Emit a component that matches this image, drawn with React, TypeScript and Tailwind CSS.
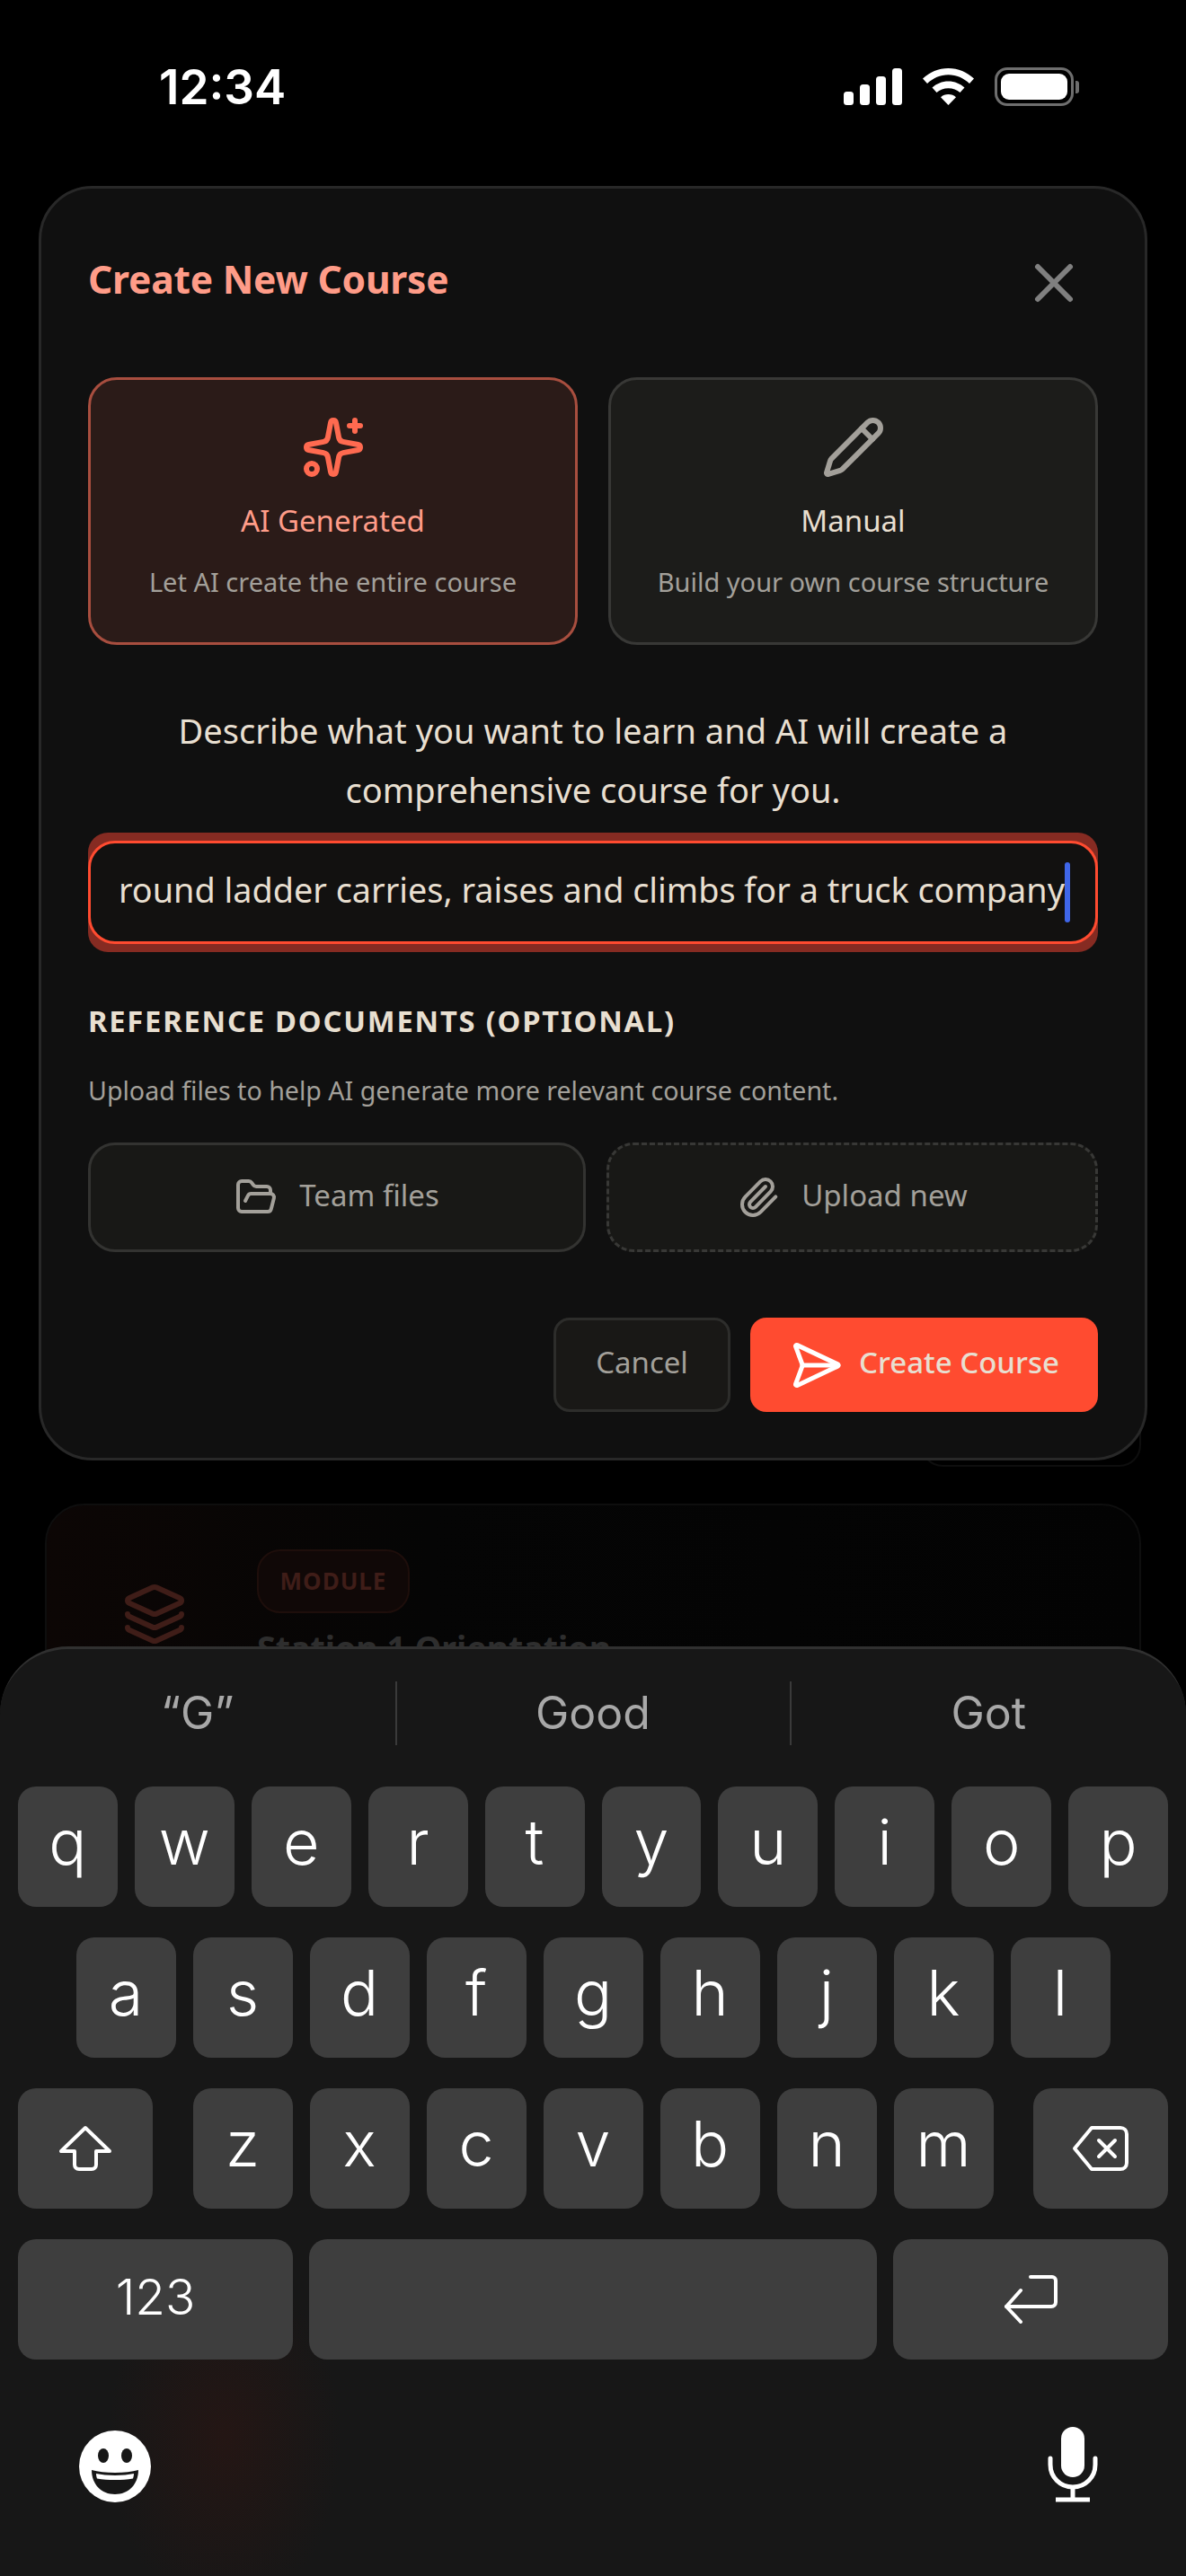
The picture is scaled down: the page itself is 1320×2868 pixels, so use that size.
import { FolderOpen, Layers, Paperclip, Pencil, SendHorizontal, Sparkles, X } from 'lucide-react';

const UI = "font-['Noto_Sans',sans-serif]";
const IOS = "font-['Inter',sans-serif]";

const ROW_1 = ['q', 'w', 'e', 'r', 't', 'y', 'u', 'i', 'o', 'p'];
const ROW_2 = ['a', 's', 'd', 'f', 'g', 'h', 'j', 'k', 'l'];
const ROW_3 = ['z', 'x', 'c', 'v', 'b', 'n', 'm'];

function Key({ label }: { label: string }) {
  return (
    <div className="flex h-[134px] w-[111px] items-center justify-center rounded-[20px] bg-[#3e3e3e] pb-[10px] text-[70px] font-light leading-none text-white">
      {label}
    </div>
  );
}

function StatusBar() {
  return (
    <div className="flex h-[207px] items-start justify-between pl-[177px] pr-[119px] pt-[66px]">
      <span className={`${IOS} text-[53px] font-semibold leading-[62px] text-white`}>12:34</span>
      <div className="flex items-center gap-[23px] pt-[9px]">
        <svg width="65" height="41" viewBox="0 0 65 41" fill="#fff">
          <rect x="0" y="26" width="11" height="15" rx="3.5" />
          <rect x="18" y="18" width="11" height="23" rx="3.5" />
          <rect x="36" y="9" width="11" height="32" rx="3.5" />
          <rect x="54" y="0" width="11" height="41" rx="3.5" />
        </svg>
        <svg width="57" height="41" viewBox="0 0 57 41" fill="#fff">
          <path d="M28.5 0C17.5 0 7.700 4.300 0 11.500l5 5.500C11.500 10.800 19.500 7.200 28.500 7.200S45.500 10.800 52 17l5-5.500C49.300 4.300 39.500 0 28.500 0z" />
          <path d="M28.500 14.500c-7 0-13.200 2.700-18 7l5 5.500c3.500-3 8-4.800 13-4.800s9.500 1.800 13 4.800l5-5.500c-4.800-4.300-11-7-18-7z" />
          <path d="M28.500 29c-3.300 0-6.300 1.200-8.500 3.200L28.500 41 37 32.200C34.800 30.200 31.800 29 28.500 29z" />
        </svg>
        <div className="flex items-center gap-[2px]">
          <div className="flex h-[43px] w-[88px] items-center justify-center rounded-[14px] border-[3px] border-[#6e6e6e]">
            <div className="h-[29px] w-[74px] rounded-[9px] bg-white" />
          </div>
          <div className="h-[14px] w-[4px] rounded-r-[3px] bg-[#6e6e6e]" />
        </div>
      </div>
    </div>
  );
}

function ModeCard({ active, icon, title, text }: { active?: boolean; icon: React.ReactNode; title: string; text: string }) {
  return (
    <div
      className={`flex h-[298px] w-[545px] flex-col items-center rounded-[32px] border-[3px] pt-[39px] ${
        active ? 'border-[#a84e3f] bg-[#2b1b18]' : 'border-[#383836] bg-[#1c1c1a]'
      }`}
    >
      {icon}
      <div className={`mt-[26px] text-[33px] leading-[40px] ${active ? 'text-[#ff9c88]' : 'text-[#e8dfd0]'}`}>{title}</div>
      <div className="mt-[28px] text-[29px] leading-[40px] text-[#a3a09a]">{text}</div>
    </div>
  );
}

function Dialog() {
  return (
    <div className={`${UI} relative z-10 mx-[43px] h-[1419px] rounded-[60px] border-[3px] border-[#282828] bg-[#101010] px-[52px] pt-[76px]`}>
      <div className="flex items-start justify-between">
        <h2 className="text-[42.5px] font-bold leading-[50px] tracking-[-0.2px] text-[#ff9c88]">Create New Course</h2>
        <X size={72} strokeWidth={2} className="-mb-[15px] -mt-[7px] mr-[13px] text-[#808080]" />
      </div>

      <div className="mt-[84px] flex justify-between">
        <ModeCard active title="AI Generated" text="Let AI create the entire course" icon={<Sparkles size={72} strokeWidth={2} className="text-[#ff6a50]" />} />
        <ModeCard title="Manual" text="Build your own course structure" icon={<Pencil size={72} strokeWidth={2} className="text-[#a3a09a]" />} />
      </div>

      <p className="mt-[62px] text-center text-[38px] leading-[66px] text-[#e8dfd0]">
        Describe what you want to learn and AI will create a
        <br />
        comprehensive course for you.
      </p>

      <div className="mt-[15px] overflow-hidden rounded-[22px] bg-[#862b22] py-[9px]">
        <div className="flex h-[115px] items-center rounded-[30px] border-[3px] border-[#ff4b30] bg-[#121110] pl-[31px]">
          <span className="-mt-[6px] whitespace-nowrap text-[37.8px] leading-[44px] text-[#e8dfd0]">round ladder carries, raises and climbs for a truck company</span>
          <span className="h-[67px] w-[6px] shrink-0 rounded-full bg-[#3f66e8]" />
        </div>
      </div>

      <h3 className="mt-[57px] text-[32.7px] font-bold leading-[40px] tracking-[1.8px] text-[#e8dfd0]">REFERENCE DOCUMENTS (OPTIONAL)</h3>
      <p className="mt-[39px] text-[28.6px] leading-[36px] text-[#a3a09a]">Upload files to help AI generate more relevant course content.</p>

      <div className="mt-[40px] flex justify-between">
        <div className="flex h-[122px] w-[554px] items-center justify-center gap-[24px] rounded-[30px] border-[3px] border-[#333331] bg-[#181816] text-[33px] text-[#a3a09a]">
          <FolderOpen size={48} strokeWidth={2} />
          <span className="-mt-[4px]">Team files</span>
        </div>
        <div className="flex h-[122px] w-[547px] items-center justify-center gap-[24px] rounded-[30px] border-[3px] border-dashed border-[#383836] bg-[#181816] text-[33px] text-[#a3a09a]">
          <Paperclip size={48} strokeWidth={2} />
          <span className="-mt-[4px]">Upload new</span>
        </div>
      </div>

      <div className="mt-[73px] flex justify-end gap-[22px]">
        <div className="flex h-[105px] w-[197px] items-center justify-center rounded-[18px] border-[3px] border-[#2d2d2b] bg-[#191816] pb-[5px] text-[33px] text-[#a3a09a]">
          Cancel
        </div>
        <div className="flex h-[105px] w-[387px] items-center justify-center gap-[18px] rounded-[18px] bg-[#ff4b30] text-[33px] font-medium text-[#e8dfd0]">
          <SendHorizontal size={60} strokeWidth={2} className="text-white" />
          <span className="-mt-[5px]">Create Course</span>
        </div>
      </div>
    </div>
  );
}

function BackgroundCard() {
  return (
    <div className={`${UI} mx-[50px] mt-[48px] h-[400px] rounded-[44px] border-[2px] border-[#0e0e0e] bg-[linear-gradient(90deg,#0c0605,#050505_35%,#030303)] pl-[84px] pt-[49px]`}>
      <div className="flex gap-[78px]">
        <Layers size={72} strokeWidth={2} className="mt-[36px] text-[#3f1d18]" />
        <div>
          <div className="flex h-[71px] w-[170px] items-center justify-center rounded-[26px] border-[2px] border-[#1e0e0b] bg-[#100807] text-[26px] font-bold tracking-[1px] text-[#3f1d18]">
            MODULE
          </div>
          <div className="mt-[17px] text-[37.5px] font-bold leading-[44px] text-[#2e2e2e]">Station 1 Orientation</div>
        </div>
      </div>
    </div>
  );
}

function Keyboard() {
  return (
    <div className={`${IOS} absolute bottom-0 left-0 right-0 z-20 h-[1035px] rounded-t-[76px] border-t-[3px] border-[#303030] bg-[#171717] bg-[radial-gradient(ellipse_130px_200px_at_250px_880px,#241614,transparent)] px-[20px]`}>
      <div className="mt-[36px] flex h-[71px] items-center text-[50px] font-normal text-[#a8a8a8]">
        <div className="flex-1 pr-[20px] text-center">“G”</div>
        <div className="h-full w-[2px] bg-[#3a3a3a]" />
        <div className="w-[437px] text-center">Good</div>
        <div className="h-full w-[2px] bg-[#3a3a3a]" />
        <div className="flex-1 pl-[20px] text-center">Got</div>
      </div>

      <div className="mt-[46px] flex flex-col gap-[34px]">
        <div className="flex justify-center gap-[19px]">
          {ROW_1.map((k) => <Key key={k} label={k} />)}
        </div>
        <div className="flex justify-center gap-[19px]">
          {ROW_2.map((k) => <Key key={k} label={k} />)}
        </div>
        <div className="flex justify-between">
          <div className="flex h-[134px] w-[150px] items-center justify-center rounded-[20px] bg-[#3e3e3e]">
            <svg width="60" height="52" viewBox="0 0 60 52" fill="none" stroke="#fff" strokeWidth="4" strokeLinejoin="round">
              <path d="M30 3 3 29h15v15c0 3 2 5 5 5h14c3 0 5-2 5-5V29h15z" />
            </svg>
          </div>
          <div className="flex gap-[19px]">
            {ROW_3.map((k) => <Key key={k} label={k} />)}
          </div>
          <div className="flex h-[134px] w-[150px] items-center justify-center rounded-[20px] bg-[#3e3e3e]">
            <svg width="64" height="52" viewBox="0 0 64 52" fill="none" stroke="#fff" strokeWidth="4" strokeLinejoin="round" strokeLinecap="round">
              <path d="M22 3h32c4 0 7 3 7 7v32c0 4-3 7-7 7H22L3 26z" />
              <path d="m30 17 18 18M48 17 30 35" />
            </svg>
          </div>
        </div>
        <div className="flex justify-between">
          <div className="flex h-[134px] w-[306px] items-center justify-center rounded-[20px] bg-[#3e3e3e] pb-[6px] text-[55px] font-light leading-none text-white">123</div>
          <div className="h-[134px] w-[632px] rounded-[20px] bg-[#3e3e3e]" />
          <div className="flex h-[134px] w-[306px] items-center justify-center rounded-[20px] bg-[#3e3e3e]">
            <svg width="60" height="54" viewBox="0 0 60 54" fill="none" stroke="#fff" strokeWidth="4" strokeLinejoin="round" strokeLinecap="round">
              <path d="M30 2h24c2 0 4 2 4 4v24c0 3-2 5-5 5H3" />
              <path d="M19 17 3 35l16 17" />
            </svg>
          </div>
        </div>
      </div>

      <div className="mt-[75px] flex items-end justify-between pl-[68px] pr-[78px]">
        <svg width="80" height="80" viewBox="0 0 80 80">
          <circle cx="40" cy="40" r="40" fill="#fff" />
          <ellipse cx="27" cy="28" rx="6" ry="8" fill="#171717" />
          <ellipse cx="53" cy="28" rx="6" ry="8" fill="#171717" />
          <path d="M14 44c7 2 16 3 26 3s19-1 26-3c0 16-11 27-26 27S14 60 14 44z" fill="#171717" />
          <path d="M19 48c6 1 13 2 21 2s15-1 21-2c0 2-.5 4-1 5.500-6 1-13 1.500-20 1.500s-14-.5-20-1.500c-.5-1.500-1-3.500-1-5.500z" fill="#fff" />
        </svg>
        <svg width="56" height="84" viewBox="0 0 56 84" fill="none">
          <rect x="15" y="0" width="26" height="56" rx="13" fill="#fff" />
          <path d="M3 35v7c0 14 11 25 25 25s25-11 25-25v-7" stroke="#fff" strokeWidth="5" strokeLinecap="round" />
          <path d="M28 67v13M9 81h38" stroke="#fff" strokeWidth="5" />
        </svg>
      </div>
    </div>
  );
}

export default function App() {
  return (
    <div className="relative h-[2868px] w-[1320px] overflow-hidden bg-black">
      <StatusBar />
      <Dialog />
      <div className="absolute left-[1025px] top-[1500px] h-[133px] w-[245px] rounded-[24px] border-[2px] border-[#0e0e0e]" />
      <BackgroundCard />
      <Keyboard />
    </div>
  );
}
